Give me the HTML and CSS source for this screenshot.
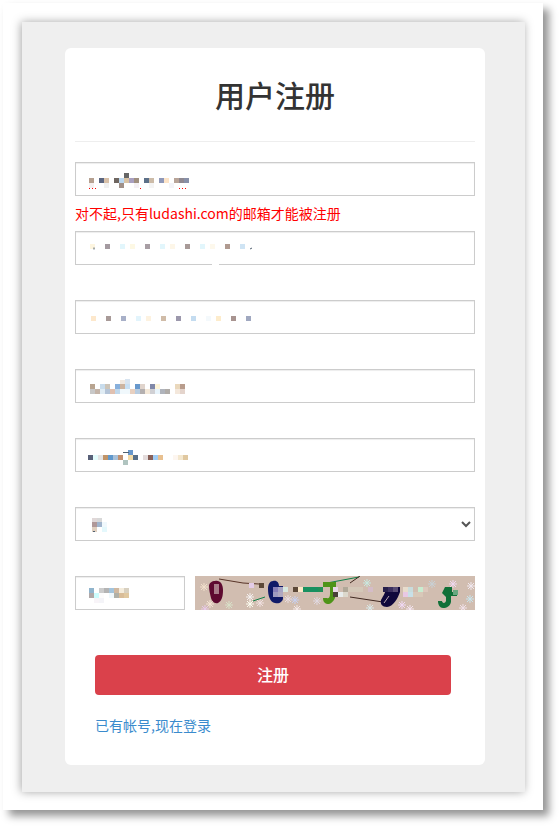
FILE: index.html
```html
<!DOCTYPE html>
<html lang="zh-CN">
<head>
    <meta charset="UTF-8">
    <meta name="viewport" content="width=device-width, initial-scale=1.0">
    <title>用户注册</title>
    <link rel="stylesheet" href="styles.css">
</head>
<body>
    <div class="window">
        <div class="panel">
            <div class="card">
                <h2 class="title">用户注册</h2>
                <form class="register-form">
                    <div class="field field-error">
                        <input type="text" class="text-input" name="email">
                        <svg class="mosaic" viewBox="0 0 400 34">
                            <rect x="49" y="11" fill="#666666"/>
                            <rect x="14" y="16" fill="#b5a090"/><rect x="24" y="16" fill="#5c6680"/><rect x="29" y="16" fill="#d8c0a8"/><rect x="39" y="16" fill="#6f6660"/><rect x="44" y="16" fill="#bcd8f0"/><rect x="49" y="16" fill="#d9c3a5"/><rect x="54" y="16" fill="#a9a0c0"/><rect x="59" y="16" fill="#a09080"/><rect x="69" y="16" fill="#5c7088"/><rect x="74" y="16" fill="#ccbba8"/><rect x="84" y="16" fill="#8f98b8"/><rect x="89" y="16" fill="#fde4c8"/><rect x="99" y="16" fill="#b8a498"/><rect x="104" y="16" fill="#8f8890"/><rect x="109" y="16" fill="#8890a8"/>
                            <rect x="14" y="21" fill="#f5f0f0"/><rect x="29" y="21" fill="#f0f0f0"/><rect x="44" y="21" fill="#a09088"/><rect x="59" y="21" fill="#f4f0f4"/><rect x="74" y="21" fill="#f4f4f4"/><rect x="94" y="21" fill="#f4f4f8"/>
                            <path class="dots" d="M14 26.5h7M65 26.5h1M104 26.5h9"/>
                        </svg>
                        <p class="error-text">对不起,只有ludashi.com的邮箱才能被注册</p>
                    </div>
                    <div class="field">
                        <input type="text" class="text-input" name="username">
                        <svg class="mosaic" viewBox="0 0 400 34">
                            <rect x="15" y="13" fill="#fdf5e0"/><rect x="30" y="13" fill="#a49aa0"/><rect x="45" y="13" fill="#e2f6fc"/><rect x="55" y="13" fill="#fdf8e4"/><rect x="70" y="13" fill="#a89ea4"/><rect x="85" y="13" fill="#e2f6fc"/><rect x="95" y="13" fill="#fdf6e8"/><rect x="110" y="13" fill="#a89a98"/><rect x="125" y="13" fill="#e2f6fc"/><rect x="135" y="13" fill="#fdf8ec"/><rect x="150" y="13" fill="#b09a90"/><rect x="165" y="13" fill="#cfe4f4"/>
                            <path class="marks" d="M19 16.5v2M175 18l2-1"/>
                            <path class="notch" d="M137 33.5h7"/>
                        </svg>
                    </div>
                    <div class="field">
                        <input type="password" class="text-input" name="password">
                        <svg class="mosaic" viewBox="0 0 400 34">
                            <rect x="16" y="16" fill="#fde8cc"/><rect x="31" y="16" fill="#a89a98"/><rect x="46" y="16" fill="#a8b0c8"/><rect x="61" y="16" fill="#e2f4fc"/><rect x="71" y="16" fill="#fdf2e0"/><rect x="86" y="16" fill="#d0bca8"/><rect x="101" y="16" fill="#9c98ac"/><rect x="116" y="16" fill="#c4dcf0"/><rect x="131" y="16" fill="#f4f9fc"/><rect x="141" y="16" fill="#fdeccc"/><rect x="156" y="16" fill="#a89490"/><rect x="171" y="16" fill="#a0a8c0"/>
                        </svg>
                    </div>
                    <div class="field">
                        <input type="text" class="text-input" name="company">
                        <svg class="mosaic" viewBox="0 0 400 34">
                            <rect x="45" y="11" fill="#f0e8e0"/><rect x="50" y="10" fill="#d8e4f0"/>
                            <rect x="15" y="15" fill="#b8a490"/><rect x="25" y="15" fill="#c8dcec"/><rect x="30" y="15" fill="#ccc4b8"/><rect x="40" y="15" fill="#88b0dc"/><rect x="45" y="15" fill="#ccb4a0"/><rect x="50" y="15" fill="#c8e0f4"/><rect x="60" y="15" fill="#6898cc"/><rect x="65" y="15" fill="#e0d4cc"/><rect x="75" y="15" fill="#8088a8"/><rect x="80" y="15" fill="#fdf4d8"/><rect x="100" y="15" fill="#ead8bc"/><rect x="105" y="15" fill="#b89c8c"/>
                            <rect x="15" y="20" fill="#c8c8c8"/><rect x="20" y="20" fill="#c4b4a8"/><rect x="25" y="20" fill="#e0ecf4"/><rect x="30" y="20" fill="#b4c4d8"/><rect x="35" y="20" fill="#e0c0b0"/><rect x="40" y="20" fill="#c0d8ec"/><rect x="45" y="20" fill="#f0f8fc"/><rect x="50" y="20" fill="#f0f8fc"/><rect x="55" y="20" fill="#e8d0c0"/><rect x="60" y="20" fill="#b8cce0"/><rect x="65" y="20" fill="#b4b0b0"/><rect x="70" y="20" fill="#f4e8d8"/><rect x="75" y="20" fill="#d0d0d4"/><rect x="80" y="20" fill="#e8f4fc"/><rect x="85" y="20" fill="#b0b4bc"/><rect x="90" y="20" fill="#b0aca8"/><rect x="100" y="20" fill="#f4e8dc"/><rect x="105" y="20" fill="#e4d4cc"/>
                        </svg>
                    </div>
                    <div class="field">
                        <input type="text" class="text-input" name="phone">
                        <svg class="mosaic" viewBox="0 0 400 34">
                            <rect x="53" y="12" fill="#6898cc"/><rect x="48" y="22" fill="#b0c4c0"/>
                            <rect x="13" y="17" fill="#586078"/><rect x="18" y="17" fill="#e4fcfc"/><rect x="23" y="17" fill="#e4e4e4"/><rect x="28" y="17" fill="#c09468"/><rect x="33" y="17" fill="#6098cc"/><rect x="38" y="17" fill="#a8c0d8"/><rect x="43" y="17" fill="#c09070"/><rect x="53" y="17" fill="#f4dca8"/><rect x="58" y="17" fill="#587088"/><rect x="68" y="17" fill="#e4dcdc"/><rect x="73" y="17" fill="#886058"/><rect x="78" y="17" fill="#a0ccf4"/><rect x="83" y="17" fill="#e8c090"/><rect x="98" y="17" fill="#fdf6f0"/><rect x="103" y="17" fill="#f4e8d0"/><rect x="108" y="17" fill="#e0c8a0"/>
                            <path class="marks" d="M48 14.5h6"/>
                        </svg>
                    </div>
                    <div class="field">
                        <select class="text-input" name="city">
                            <option></option>
                        </select>
                        <svg class="mosaic" viewBox="0 0 400 34">
                            <rect x="17" y="11" fill="#e0d8d8"/><rect x="22" y="11" fill="#d8d8d8"/>
                            <rect x="17" y="15" fill="#b09898"/><rect x="22" y="15" fill="#a0b4cc"/><rect x="27" y="15" fill="#f0f8fc"/>
                            <rect x="17" y="20" fill="#e0d0c0"/><rect x="27" y="20" fill="#e4f8fc"/>
                            <path class="marks" d="M18 24.5h2"/>
                        </svg>
                    </div>
                    <div class="captcha-row">
                        <div class="captcha-input">
                            <input type="text" class="text-input" name="code">
                            <svg class="mosaic" viewBox="0 0 110 34">
                                <rect x="14" y="12" fill="#90b4cc"/><rect x="24" y="12" fill="#cccccc"/><rect x="29" y="12" fill="#b4b4b4"/><rect x="34" y="12" fill="#a4c4dc"/><rect x="39" y="12" fill="#d0b8a0"/><rect x="44" y="12" fill="#f4ecdc"/><rect x="49" y="12" fill="#d8d0c0"/>
                                <rect x="14" y="17" fill="#b0a8a8"/><rect x="19" y="17" fill="#ccfcfc"/><rect x="24" y="17" fill="#fcfcfc"/><rect x="34" y="17" fill="#f0f8fc"/><rect x="39" y="17" fill="#b0b0a8"/><rect x="44" y="17" fill="#d8bc98"/><rect x="49" y="17" fill="#e0c8a0"/>
                                <rect x="19" y="22" fill="#f8f4f8"/><rect x="24" y="22" fill="#f4f4f8"/>
                            </svg>
                        </div>
                        <svg class="captcha" viewBox="0 0 280 34">
                            <defs>
                                <path id="flake" d="M-4 0H4M0-4V4M-3-3L3 3M-3 3L3-3"/>
                            </defs>
                            <g class="flakes">
                                <use href="#flake" x="9" y="11" stroke="#f2e0cc"/><use href="#flake" x="15" y="28" stroke="#f4e4d4"/><use href="#flake" x="34" y="29" stroke="#d8e0c8"/><use href="#flake" x="10" y="33" stroke="#e8c8e8"/><use href="#flake" x="55" y="28" stroke="#fcfcf0"/><use href="#flake" x="65" y="27" stroke="#f0e0e0"/><use href="#flake" x="55" y="21" stroke="#f4f0f0"/><use href="#flake" x="93" y="23" stroke="#e8dce0"/><use href="#flake" x="100" y="24" stroke="#c8d0f0"/><use href="#flake" x="122" y="25" stroke="#e0d8e0"/><use href="#flake" x="102" y="33" stroke="#f4e8e8"/><use href="#flake" x="175" y="32" stroke="#d8e8e8"/><use href="#flake" x="207" y="29" stroke="#f0d8f4"/><use href="#flake" x="215" y="33" stroke="#f4e4f0"/><use href="#flake" x="237" y="8" stroke="#c8d0d4"/><use href="#flake" x="258" y="8" stroke="#f0d8f0"/><use href="#flake" x="276" y="10" stroke="#f0e8f0"/><use href="#flake" x="275" y="23" stroke="#c8e4ec"/><use href="#flake" x="268" y="32" stroke="#f0e0e8"/><use href="#flake" x="172" y="7" stroke="#c8e8e0"/>
                            </g>
                            <path class="thin" stroke="#583428" d="M24 3L48 7L64 8"/>
                            <path class="thin" stroke="#108048" d="M58 25L70 21"/>
                            <path class="thin" stroke="#108048" d="M132 7L164 1"/>
                            <path class="thin" stroke="#402820" d="M155 7L165 0M155 21L188 26"/>
                            <path fill="#5e0a30" d="M20 5C25 4 28 8 28 14C28 20 27 25 23 27C19 28 17 25 16 22C15 18 14 14 14 10C14 7 17 5 20 5Z"/>
                            <path fill="#101a68" d="M78 5C82 4 84 7 84 10L88 10V22C88 26 84 28 80 27C75 26 73 20 73 13C73 8 75 5 78 5Z"/>
                            <path fill="#4e9418" d="M128 6H141V16C141 22 138 27 134 28C130 28 128 26 128 22L132 22C133 23 135 22 135 18V11H128Z"/>
                            <path fill="#10083c" d="M190 11H205V16C203 22 198 31 192 31C187 31 185 28 186 24C188 20 192 15 190 11Z"/>
                            <path class="thin" stroke="#b8a8b0" d="M194 20L189 27"/>
                            <path fill="#107038" d="M250 11H257V16H262V20H256V26C255 30 252 32 248 32C245 32 243 29 243 25L247 25C247 27 250 28 251 25V21L247 17Z"/>
                            <rect class="cell" x="19" y="8" fill="#a87c88"/><rect class="cell" x="19" y="13" fill="#a87c88"/>
                            <rect class="cell" x="78" y="11" fill="#8880b8"/><rect class="cell" x="78" y="16" fill="#a09cc0"/><rect class="cell" x="83" y="16" fill="#b0a8c0"/>
                            <rect class="cell" x="54" y="7" fill="#e4cce8"/><rect class="cell" x="64" y="7" fill="#5c4838"/>
                            <rect class="cell" x="83" y="11" fill="#a8a4c4"/><rect class="cell" x="88" y="11" fill="#d8e8e0"/><rect class="cell" x="98" y="11" fill="#5c4838"/><rect class="cell" x="103" y="11" fill="#fce8c8"/><rect class="cell" x="108" y="11" fill="#189060"/><rect class="cell" x="113" y="11" fill="#189060"/><rect class="cell" x="118" y="11" fill="#189060"/><rect class="cell" x="123" y="11" fill="#209058"/>
                            <rect class="cell" x="138" y="11" fill="#e8d8e8"/><rect class="cell" x="148" y="11" fill="#b0a898"/><rect class="cell" x="153" y="11" fill="#d4c8b8"/><rect class="cell" x="158" y="11" fill="#d4c8b8"/><rect class="cell" x="163" y="11" fill="#d4c8b8"/><rect class="cell" x="173" y="11" fill="#d4bcc8"/><rect class="cell" x="188" y="11" fill="#28204c"/><rect class="cell" x="193" y="11" fill="#3c3060"/><rect class="cell" x="198" y="11" fill="#584c74"/><rect class="cell" x="208" y="11" fill="#e8dccc"/><rect class="cell" x="213" y="11" fill="#c8dcdc"/><rect class="cell" x="223" y="11" fill="#c8ecd0"/><rect class="cell" x="228" y="11" fill="#dcc8bc"/>
                            <rect class="cell" x="138" y="16" fill="#484038"/><rect class="cell" x="143" y="16" fill="#e8ecec"/><rect class="cell" x="148" y="16" fill="#dcd8cc"/><rect class="cell" x="208" y="16" fill="#e8c8e4"/><rect class="cell" x="213" y="16" fill="#c8e0e8"/><rect class="cell" x="218" y="16" fill="#d8c8b8"/><rect class="cell" x="223" y="16" fill="#d8c8b8"/><rect class="cell" x="258" y="14" fill="#68a880"/>
                        </svg>
                    </div>
                    <button type="submit" class="submit-button">注册</button>
                    <a href="#" class="login-link">已有帐号,现在登录</a>
                </form>
            </div>
        </div>
    </div>
</body>
</html>
```

FILE: styles.css
```css
* {
    margin: 0;
    padding: 0;
    box-sizing: border-box;
    font-family: "Noto Sans CJK SC", "Noto Sans", sans-serif;
}

body {
    min-height: 100vh;
    padding: 3px;
    background-color: #fff;
}

.window {
    width: 540px;
    height: 807px;
    padding: 19px 18px 18px 19px;
    background-color: #fff;
    box-shadow: 6px 6px 8px rgba(0, 0, 0, 0.42);
}

.panel {
    height: 770px;
    padding: 26px 40px 27px 43px;
    background-color: #efefef;
    box-shadow: -1px 0 9px rgba(0, 0, 0, 0.35);
}

.card {
    height: 717px;
    padding: 0 10px;
    border-radius: 6px;
    background-color: #fff;
}

.title {
    height: 94px;
    border-bottom: 1px solid #eee;
    color: #333;
    font-size: 30px;
    font-weight: 500;
    line-height: 92px;
    text-align: center;
}

.register-form {
    padding-top: 20px;
}

.field {
    position: relative;
    margin-bottom: 35px;
}

.field-error {
    margin-bottom: 0;
}

.text-input {
    display: block;
    width: 100%;
    height: 34px;
    border: 1px solid #ccc;
    border-radius: 0;
    background-color: #fff;
    box-shadow: inset 0 1px 1px rgba(0, 0, 0, 0.075);
    color: #555;
    font-size: 14px;
}

.mosaic {
    position: absolute;
    top: 0;
    left: 0;
    width: 100%;
    height: 34px;
    pointer-events: none;
}

.mosaic rect,
.cell {
    width: 5px;
    height: 5px;
}

.dots {
    fill: none;
    stroke: #f00;
    stroke-dasharray: 1 2;
}

.marks {
    fill: none;
    stroke: #51606f;
}

.notch {
    stroke: #fff;
}

.error-text {
    height: 35px;
    color: #f00;
    font-size: 14px;
    line-height: 35px;
}

.captcha-row {
    display: flex;
    gap: 10px;
}

.captcha-input {
    position: relative;
    width: 110px;
}

.captcha {
    display: block;
    width: 280px;
    height: 34px;
    background-color: #d1bdb0;
}

.flakes use {
    fill: none;
    stroke-width: 1;
}

.thin {
    fill: none;
    stroke-width: 1;
}

.submit-button {
    display: block;
    width: 356px;
    height: 40px;
    margin: 45px 0 0 20px;
    padding-bottom: 2px;
    border: none;
    border-radius: 4px;
    background-color: #da414b;
    color: #fff;
    font-size: 16px;
    font-weight: 500;
    cursor: pointer;
}

.login-link {
    display: block;
    margin: 20px 0 0 20px;
    color: #3a8bcd;
    font-size: 14px;
    line-height: 20px;
    text-decoration: none;
}
```
